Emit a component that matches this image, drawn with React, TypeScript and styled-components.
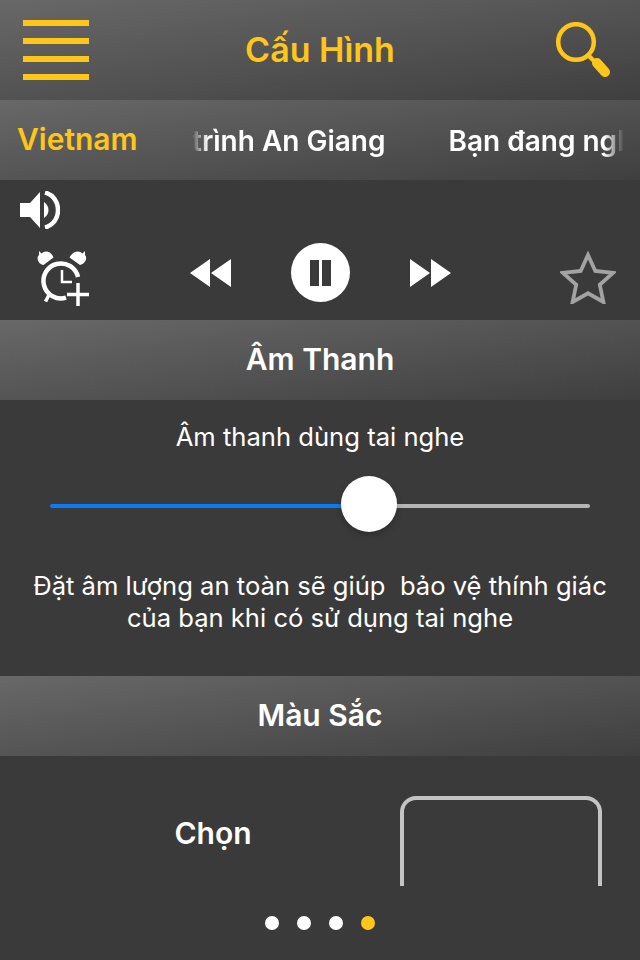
import React from "react";
import styled, { createGlobalStyle } from "styled-components";

const Global = createGlobalStyle`
  html, body { margin: 0; padding: 0; background: #3a3a3a; }
  * { box-sizing: border-box; }
`;

const YELLOW = "#ffc61a";
const BAND = "linear-gradient(172deg, #686868 0%, #3f3f3f 100%)";

const Screen = styled.main`
  position: relative;
  width: 640px;
  height: 960px;
  overflow: hidden;
  background: #3a3a3a;
  color: #fff;
  font-family: Inter, "Noto Sans", sans-serif;
`;

const Header = styled.header`
  height: 100px;
  display: grid;
  grid-template-columns: 1fr auto 1fr;
  align-items: center;
  padding: 0 23px;
  background: ${BAND};
`;

const Menu = styled.div`
  width: 66px;
  display: flex;
  flex-direction: column;
  gap: 12px;
  span { height: 6px; background: ${YELLOW}; }
`;

const Title = styled.h1`
  margin: -2px 0 0;
  font-size: 34px;
  font-weight: 600;
  color: ${YELLOW};
`;

const SearchSlot = styled.div`
  display: flex;
  justify-content: flex-end;
  padding-right: 6px;
`;

const TabsBar = styled.nav`
  height: 80px;
  display: flex;
  align-items: center;
  padding-left: 17px;
  background: ${BAND};
`;

const ActiveTab = styled.div`
  width: 175px;
  font-size: 30px;
  font-weight: 600;
  color: ${YELLOW};
  margin-top: -2px;
`;

const Ticker = styled.div`
  width: 432px;
  display: flex;
  gap: 63px;
  overflow: hidden;
  white-space: nowrap;
  font-size: 28px;
  font-weight: 600;
  padding-top: 2px;
  -webkit-mask-image: linear-gradient(90deg, transparent 0, #000 16px, #000 412px, transparent 432px);
  mask-image: linear-gradient(90deg, transparent 0, #000 16px, #000 412px, transparent 432px);
`;

const Player = styled.section`
  height: 140px;
  padding: 11px 20px 0 20px;
`;

const Controls = styled.div`
  display: grid;
  grid-template-columns: 1fr auto 1fr;
  align-items: start;
  margin-top: 14px;
`;

const AlarmSlot = styled.div`
  padding: 7px 0 0 17px;
  display: flex;
`;

const Transport = styled.div`
  display: flex;
  align-items: center;
  gap: 59px;
`;

const PauseButton = styled.div`
  width: 59px;
  height: 59px;
  border-radius: 50%;
  background: #fff;
  display: flex;
  align-items: center;
  justify-content: center;
  gap: 3px;
  span { width: 9px; height: 26px; background: #3a3a3a; }
`;

const StarSlot = styled.div`
  display: flex;
  justify-content: flex-end;
  padding: 7px 4px 0 0;
`;

const SectionBar = styled.h2`
  margin: 0;
  height: 80px;
  display: flex;
  align-items: center;
  justify-content: center;
  padding-bottom: 2px;
  font-size: 30px;
  font-weight: 600;
  background: ${BAND};
`;

const SoundPanel = styled.section`
  height: 276px;
  padding-top: 21px;
  text-align: center;
  font-size: 25.6px;
  line-height: 32px;
`;

const Label = styled.div``;

const SliderWrap = styled.div`
  position: relative;
  height: 56px;
  margin: 23px 50px 0;
  display: flex;
  align-items: center;
  padding-top: 4px;
`;

const Filled = styled.div`
  width: 300px;
  height: 4px;
  border-radius: 2px 0 0 2px;
  background: #0a7af5;
`;

const Rest = styled.div`
  flex: 1;
  height: 4px;
  border-radius: 0 2px 2px 0;
  background: #b5b5b5;
`;

const Thumb = styled.div`
  position: absolute;
  left: 291px;
  top: 0;
  width: 56px;
  height: 56px;
  border-radius: 50%;
  background: #fff;
  box-shadow: 0 3px 6px rgba(0, 0, 0, 0.22);
`;

const Note = styled.p`
  margin: 38px 0 0;
`;

const ColorPanel = styled.section`
  display: flex;
  align-items: flex-start;
  padding-top: 40px;
`;

const ColorLabel = styled.div`
  width: 400px;
  padding: 19px 0 0 26px;
  text-align: center;
  font-size: 30px;
  font-weight: 600;
  line-height: 36px;
`;

const Swatch = styled.div`
  width: 202px;
  height: 90px;
  border: 4px solid #c4c4c4;
  border-bottom: 0;
  border-radius: 16px 16px 0 0;
`;

const Dots = styled.div`
  position: absolute;
  left: 0;
  right: 0;
  top: 916px;
  display: flex;
  justify-content: center;
  gap: 18px;
`;

const Dot = styled.span<{ $active?: boolean }>`
  width: 14px;
  height: 14px;
  border-radius: 50%;
  background: ${(p) => (p.$active ? YELLOW : "#fff")};
`;

const Search = () => (
  <svg width="56" height="56" viewBox="0 0 56 56" style={{ display: "block" }}>
    <circle cx="21" cy="20" r="17.800" fill="none" stroke={YELLOW} strokeWidth="4.500" />
    <path d="M33 33l8 8" stroke={YELLOW} strokeWidth="4.500" />
    <path d="M42 41l8 9" stroke={YELLOW} strokeWidth="10" strokeLinecap="round" />
  </svg>
);

const Speaker = () => (
  <svg width="40" height="38" viewBox="0 0 40 38" style={{ display: "block" }}>
    <path d="M0 12h10L20 1v36L10 26H0z" fill="#fff" />
    <path d="M24 11c3 2 4.500 5 4.500 8s-1.500 6-4.500 8z" fill="#fff" />
    <path d="M25 1.500C33 3.500 38 10.500 38 19s-5 15.500-13 17.500" fill="none" stroke="#fff" strokeWidth="4.500" />
  </svg>
);

const Alarm = () => (
  <svg width="52" height="56" viewBox="0 0 52 56" style={{ display: "block" }}>
    <path d="M2 1l2.500 2.500C8 0 14 1 16.500 7.500L6.500 15C1 14-1 8 2 5z" fill="#fff" />
    <path d="M48 1l-2.500 2.500C42 0 36 1 32.500 7.500L43 15c5-1 8-7 5-10z" fill="#fff" />
    <path d="M41 27A17.500 17.500 0 1 0 29 47.700" fill="none" stroke="#fff" strokeWidth="4.500" />
    <path d="M12 45l-3.500 6.500" fill="none" stroke="#fff" strokeWidth="3.500" />
    <path d="M25 20v12h10" fill="none" stroke="#fff" strokeWidth="2.500" />
    <path d="M30 44.500h22M41 33v23" fill="none" stroke="#fff" strokeWidth="3.500" />
  </svg>
);

const Rewind = () => (
  <svg width="42" height="28" viewBox="0 0 42 28" style={{ display: "block" }}>
    <path d="M0 14L20 0v28zM21 14L41 0v28z" fill="#fff" />
  </svg>
);

const Forward = () => (
  <svg width="42" height="28" viewBox="0 0 42 28" style={{ display: "block" }}>
    <path d="M1 0l20 14L1 28zM22 0l20 14-20 14z" fill="#fff" />
  </svg>
);

const Star = () => (
  <svg width="56" height="54" viewBox="0 0 56 54" style={{ display: "block" }}>
    <path d="M28 5l7.300 16 17.700 1.900-13.200 11.900 3.600 17.200L28 43.300 12.600 52l3.600-17.200L3 22.900l17.700-1.900z" fill="none" stroke="#a3a3a3" strokeWidth="3.800" />
  </svg>
);

export default function App() {
  return (
    <Screen>
      <Global />
      <Header>
        <Menu><span /><span /><span /><span /></Menu>
        <Title>Cấu Hình</Title>
        <SearchSlot><Search /></SearchSlot>
      </Header>
      <TabsBar>
        <ActiveTab>Vietnam</ActiveTab>
        <Ticker>
          <span>trình An Giang</span>
          <span>Bạn đang nghe</span>
        </Ticker>
      </TabsBar>
      <Player>
        <Speaker />
        <Controls>
          <AlarmSlot><Alarm /></AlarmSlot>
          <Transport>
            <Rewind />
            <PauseButton><span /><span /></PauseButton>
            <Forward />
          </Transport>
          <StarSlot><Star /></StarSlot>
        </Controls>
      </Player>
      <SectionBar>Âm Thanh</SectionBar>
      <SoundPanel>
        <Label>Âm thanh dùng tai nghe</Label>
        <SliderWrap>
          <Filled />
          <Rest />
          <Thumb />
        </SliderWrap>
        <Note>
          Đặt âm lượng an toàn sẽ giúp&nbsp; bảo vệ thính giác
          <br />
          của bạn khi có sử dụng tai nghe
        </Note>
      </SoundPanel>
      <SectionBar>Màu Sắc</SectionBar>
      <ColorPanel>
        <ColorLabel>Chọn</ColorLabel>
        <Swatch />
      </ColorPanel>
      <Dots>
        <Dot /><Dot /><Dot /><Dot $active />
      </Dots>
    </Screen>
  );
}
